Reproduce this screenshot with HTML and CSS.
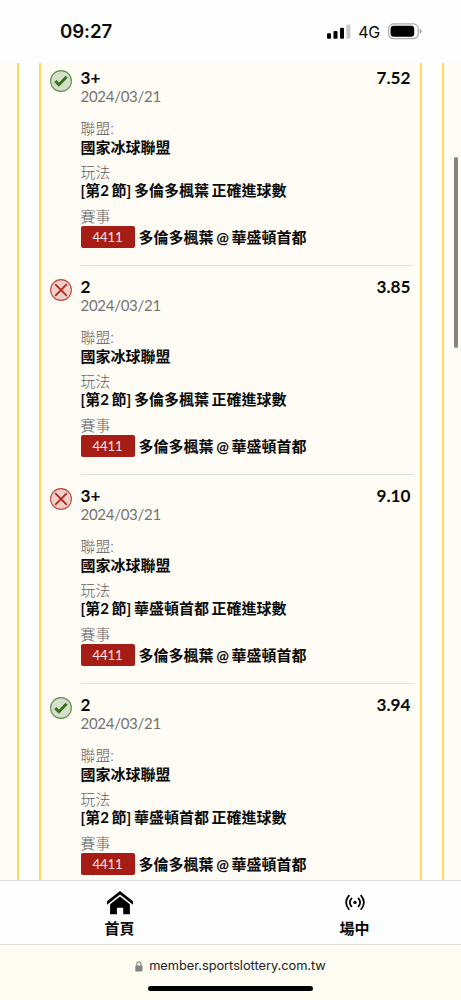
FILE: index.html
```
<!DOCTYPE html>
<html lang="zh-Hant">
<head>
<meta charset="utf-8">
<title>運彩</title>
<link rel="stylesheet" href="styles.css">
</head>
<body>
<svg class="defs" width="0" height="0" aria-hidden="true">
  <symbol id="win" viewBox="0 0 22 22"><circle cx="11" cy="11" r="10.4" fill="#d5dfca" stroke="#5c8f4c" stroke-width="1.1"/><path d="M5.3 11.1l3.6 3.6 7.7-8" fill="none" stroke="#38701f" stroke-width="2.9"/></symbol>
  <symbol id="lose" viewBox="0 0 22 22"><circle cx="11" cy="11" r="10.4" fill="#eed0c8" stroke="#bd473f" stroke-width="1.1"/><path d="M5.2 5.2l11.6 11.6M16.8 5.2L5.2 16.8" fill="none" stroke="#b12318" stroke-width="1.7"/></symbol>
</svg>
<div class="phone">
  <header class="status">
    <span class="time">09:27</span>
    <div class="signals">
      <svg width="24" height="15" viewBox="0 0 24 15"><rect x="0" y="9.2" width="4" height="5.6" rx="1.1"/><rect x="6.5" y="7" width="4" height="7.8" rx="1.1"/><rect x="13" y="3.8" width="4" height="11" rx="1.1"/><rect x="19.4" y="0.4" width="4" height="14.4" rx="1.1" fill="#c9c9c9"/></svg>
      <span class="net">4G</span>
      <svg width="34" height="17" viewBox="0 0 34 17"><rect x="0.7" y="0.9" width="29.6" height="14.8" rx="4.8" fill="none" stroke="#aaa" stroke-width="1.2"/><rect x="2.6" y="2.8" width="23.6" height="11" rx="3.2"/><path d="M31.8 5.8q1.8.6 1.8 2.5t-1.8 2.5z" fill="#999"/></svg>
    </div>
  </header>
  <main class="page">
    <div class="outer"><div class="ticket">
      <article class="bet">
        <svg class="mark"><use href="#win"/></svg>
        <div class="info">
          <div class="head"><span>3+</span><span>7.52</span></div>
          <div class="date">2024/03/21</div>
          <div class="label first">聯盟:</div><div class="value">國家冰球聯盟</div>
          <div class="label">玩法</div><div class="value">[第2 節] 多倫多楓葉 正確進球數</div>
          <div class="label event">賽事</div><div class="match"><span class="code">4411</span><span class="value">多倫多楓葉 @ 華盛頓首都</span></div>
        </div>
      </article>
      <article class="bet">
        <svg class="mark"><use href="#lose"/></svg>
        <div class="info">
          <div class="head"><span>2</span><span>3.85</span></div>
          <div class="date">2024/03/21</div>
          <div class="label first">聯盟:</div><div class="value">國家冰球聯盟</div>
          <div class="label">玩法</div><div class="value">[第2 節] 多倫多楓葉 正確進球數</div>
          <div class="label event">賽事</div><div class="match"><span class="code">4411</span><span class="value">多倫多楓葉 @ 華盛頓首都</span></div>
        </div>
      </article>
      <article class="bet">
        <svg class="mark"><use href="#lose"/></svg>
        <div class="info">
          <div class="head"><span>3+</span><span>9.10</span></div>
          <div class="date">2024/03/21</div>
          <div class="label first">聯盟:</div><div class="value">國家冰球聯盟</div>
          <div class="label">玩法</div><div class="value">[第2 節] 華盛頓首都 正確進球數</div>
          <div class="label event">賽事</div><div class="match"><span class="code">4411</span><span class="value">多倫多楓葉 @ 華盛頓首都</span></div>
        </div>
      </article>
      <article class="bet">
        <svg class="mark"><use href="#win"/></svg>
        <div class="info">
          <div class="head"><span>2</span><span>3.94</span></div>
          <div class="date">2024/03/21</div>
          <div class="label first">聯盟:</div><div class="value">國家冰球聯盟</div>
          <div class="label">玩法</div><div class="value">[第2 節] 華盛頓首都 正確進球數</div>
          <div class="label event">賽事</div><div class="match"><span class="code">4411</span><span class="value">多倫多楓葉 @ 華盛頓首都</span></div>
        </div>
      </article>
    </div></div>
    <div class="scrollbar"></div>
  </main>
  <nav class="tabs">
    <a class="tab home">
      <svg width="26" height="24" viewBox="0 0 26 24"><path d="M13 0L0 10.2v3.6L13 3.6l13 10.2v-3.6z"/><path d="M3.1 13.3L13 5.6l9.9 7.7v10h-6.7v-6.6H9.9v6.6H3.1z"/></svg>
      <span>首頁</span>
    </a>
    <a class="tab">
      <svg width="20" height="24" viewBox="0 0 20 24" fill="none" stroke="#000" stroke-width="1.7" stroke-linecap="round"><circle cx="10" cy="11.4" r="1.7" fill="#000" stroke="none"/><path d="M6.5 7.4q-3.3 4 0 8M13.5 7.4q3.3 4 0 8M3.9 4.6q-5.6 6.8 0 13.6M16.1 4.6q5.6 6.8 0 13.6"/></svg>
      <span>場中</span>
    </a>
  </nav>
  <footer class="browser">
    <div class="address">
      <svg width="8" height="11" viewBox="0 0 8 11"><rect x="0.3" y="4.5" width="7.2" height="6" rx="1" fill="#858585"/><path d="M1.9 5V3a2 2.2 0 0 1 4 0v2" fill="none" stroke="#858585" stroke-width="1.1"/></svg>
      <span>member.sportslottery.com.tw</span>
    </div>
    <div class="indicator"></div>
  </footer>
</div>
</body>
</html>
```
FILE: styles.css
```
* { box-sizing: border-box; }
body { margin: 0; background: #fffcf5; color: #0a0a0a; }
.defs { position: absolute; }
.phone { width: 461px; height: 1000px; display: flex; flex-direction: column; overflow: hidden; font-family: Lato, "Noto Sans CJK TC", sans-serif; }
.status { height: 63px; flex: none; background: #fefefe; display: flex; justify-content: space-between; align-items: flex-start; padding: 20px 39px 0 60px; font-family: Inter, sans-serif; }
.time { font-size: 18.7px; line-height: 23px; font-weight: 600; letter-spacing: -0.1px; }
.signals { display: flex; align-items: center; height: 22px; }
.net { font-size: 16px; line-height: 22px; margin: 1px 8px 0 7px; letter-spacing: -0.2px; }
.page { height: 817px; flex: none; overflow: hidden; padding: 0 17px; position: relative; background: #fffcf5; }
.outer { height: 817px; background: #fff; border: solid #f9dc5c; border-width: 0 2px; padding: 0 20px; }
.ticket { height: 817px; background: #fffcf5; border: solid #f9dc5c; border-width: 0 2px; padding: 0 7px 0 9px; overflow: hidden; }
.bet { height: 209px; display: flex; gap: 8.5px; }
.bet:first-child { margin-top: -6px; }
.mark { width: 22px; height: 22px; margin-top: 13px; flex: none; }
.info { flex: 1; padding-top: 12px; border-bottom: 1px solid #e3e1dc; }
.head { display: flex; justify-content: space-between; padding-right: 2.5px; font-size: 17.2px; line-height: 18px; font-weight: 700; }
.date { font-size: 15px; line-height: 18px; color: #737373; letter-spacing: -0.28px; }
.label { margin-top: 7px; font-size: 14.9px; line-height: 18px; color: #5f5f5f; font-weight: 300; }
.label.first { margin-top: 14px; }
.label.event { margin-top: 8px; }
.value { font-size: 15px; line-height: 18px; font-weight: 700; white-space: nowrap; word-spacing: -1px; }
.label.first + .value { margin-top: 1px; }
.match { display: flex; align-items: center; gap: 4px; margin-top: 1px; }
.code { width: 54px; height: 22px; border-radius: 2px; background: #a51d15; color: #f8e9e5; font-size: 13px; line-height: 22px; text-align: center; }
.scrollbar { position: absolute; right: 3px; top: 94px; width: 4px; height: 191px; border-radius: 2px; background: #858480; }
.tabs { height: 65px; flex: none; display: grid; grid-template-columns: 239px 231px; background: #fefefe; border: solid #dfdfdd; border-width: 1px 0; overflow: hidden; }
.tab { display: flex; flex-direction: column; align-items: center; padding-top: 10px; font-size: 15px; line-height: 20px; font-weight: 700; }
.tab span { margin-top: 3px; }
.browser { height: 55px; flex: none; padding-top: 11px; background: #fcfcf3; display: flex; flex-direction: column; align-items: center; }
.address { display: flex; align-items: center; gap: 6px; height: 20px; font: 12.8px/20px Inter, sans-serif; letter-spacing: -0.02px; color: #222; }
.indicator { width: 165px; height: 5px; margin-top: 10px; border-radius: 3px; background: #000; }
```
